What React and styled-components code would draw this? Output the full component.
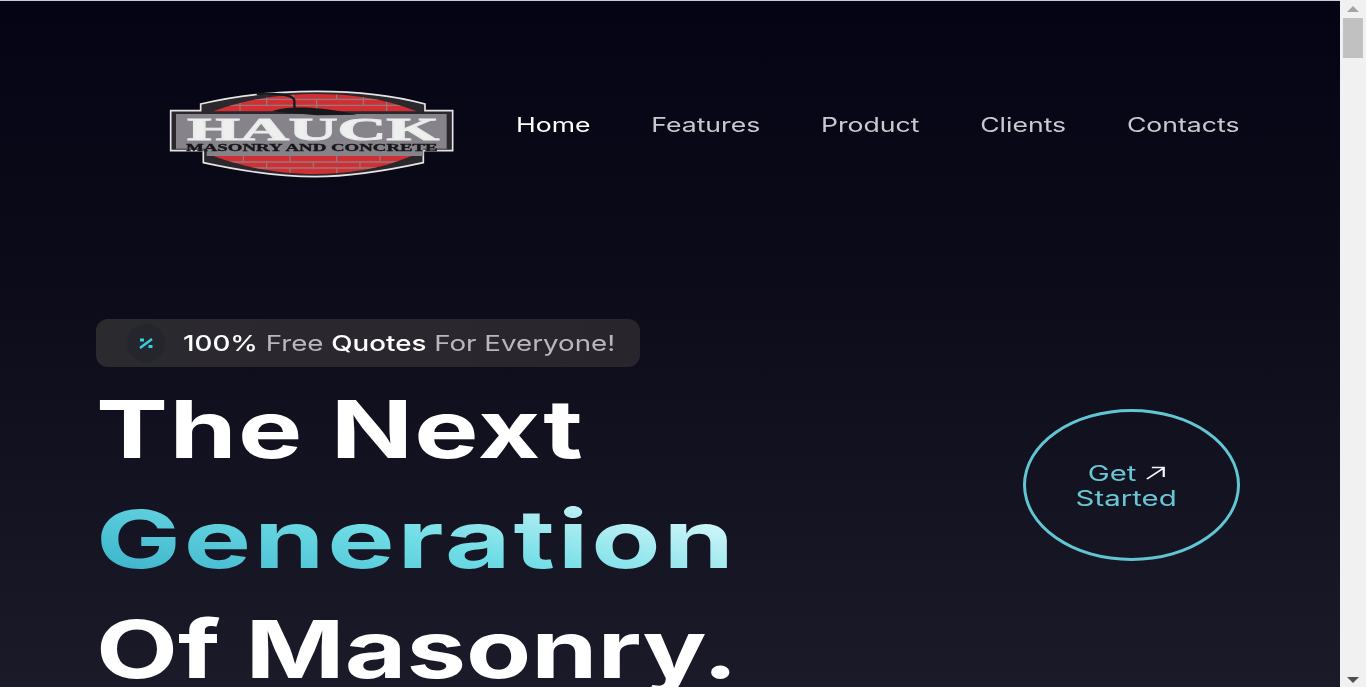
import React from "react";
import styled, { createGlobalStyle } from "styled-components";

const GlobalStyle = createGlobalStyle`
  html, body {
    margin: 0;
    padding: 0;
    height: 100%;
    overflow: hidden;
    background: #f1f1f1;
  }
`;

const Window = styled.div`
  display: flex;
  width: 1366px;
  height: 687px;
  overflow: hidden;
`;

const Page = styled.main`
  width: 1340px;
  height: 687px;
  flex: none;
  overflow: hidden;
  box-sizing: border-box;
  border-top: 1px solid #c9ccd2;
  background: linear-gradient(180deg, #040414 0%, #0b0b1a 40%, #1a1a29 100%);
  font-family: Inter, "Liberation Sans", sans-serif;
  color: #fff;
`;

const Header = styled.header`
  display: flex;
  align-items: flex-start;
  padding: 79px 0 0 160px;
`;

const LogoMark = styled.svg`
  display: block;
  width: 310px;
  height: 110px;
  flex: none;
  filter: blur(0.6px);
`;

const Nav = styled.nav`
  display: flex;
  justify-content: space-between;
  width: 544px;
  margin-left: 46px;
  margin-top: 31px;
  transform: scaleX(1.33);
  transform-origin: left center;
`;

const NavLink = styled.a`
  font-size: 20px;
  line-height: 28px;
  font-weight: 400;
  color: ${(props) => (props.$active ? "#ffffff" : "#c9c9cf")};
`;

const Hero = styled.section`
  display: flex;
  justify-content: space-between;
  align-items: flex-start;
  padding: 129px 100px 0 96px;
`;

const HeroText = styled.div`
  display: flex;
  flex-direction: column;
  align-items: flex-start;
`;

const Badge = styled.div`
  display: flex;
  align-items: center;
  gap: 18px;
  width: 544px;
  height: 48px;
  box-sizing: border-box;
  padding-left: 31px;
  border-radius: 12px;
  background: linear-gradient(90deg, #2b2a2f, #29252d);
  font-size: 22px;
  color: #b9b6bd;
`;

const BadgeIcon = styled.span`
  display: flex;
  align-items: center;
  justify-content: center;
  width: 38px;
  height: 38px;
  border-radius: 50%;
  background: #25262d;
`;

const BadgeText = styled.span`
  transform: scaleX(1.26);
  transform-origin: left center;
  white-space: nowrap;
`;

const Strong = styled.span`
  font-weight: 500;
  color: #fff;
`;

const Title = styled.h1`
  margin: 7px 0 0 0;
  font-size: 80px;
  line-height: 110px;
  font-weight: 700;
  white-space: nowrap;
`;

const TitleLine = styled.span`
  display: block;
  width: fit-content;
  letter-spacing: ${(props) => props.$spacing}px;
  transform: scaleX(${(props) => props.$stretch});
  transform-origin: left center;
`;

const Accent = styled(TitleLine)`
  background: linear-gradient(20deg, #38b0c9 5%, #6fdde6 50%, #d2f6f9 85%);
  -webkit-background-clip: text;
  background-clip: text;
  color: transparent;
`;

const CircleLink = styled.a`
  display: flex;
  align-items: center;
  justify-content: center;
  width: 217px;
  height: 152px;
  margin-top: 90px;
  box-sizing: border-box;
  padding-right: 10px;
  border: 3px solid #62c6d2;
  border-radius: 50%;
  color: #69c6d3;
`;

const CircleLabel = styled.span`
  display: flex;
  flex-direction: column;
  align-items: center;
  font-size: 21px;
  line-height: 25px;
  margin-top: 1px;
  transform: scaleX(1.4);
`;

const CircleRow = styled.span`
  display: flex;
  align-items: center;
  gap: 6px;
`;

const Scrollbar = styled.aside`
  display: flex;
  flex-direction: column;
  align-items: center;
  width: 26px;
  height: 687px;
  flex: none;
  box-sizing: border-box;
  padding: 6px 3px 4px;
  background: #f1f1f1;
`;

const ScrollThumb = styled.div`
  width: 20px;
  height: 40px;
  margin-top: 6px;
  background: #c1c1c1;
`;

const ScrollArrow = styled.svg`
  display: block;
  width: 12px;
  height: 6px;
  margin-top: ${(props) => (props.$down ? "auto" : "0")};
`;

const mortar = [
  "M100 76H830 M150 58H770 M215 40H700",
  "M320 40V58 M400 40V58 M530 40V58 M610 40V58 M240 58V76 M320 58V76 M470 58V76 M610 58V76 M680 58V76 M240 76V94 M470 76V94 M680 76V94",
  "M120 246H800 M190 264H730",
  "M250 228V246 M390 228V246 M530 228V246 M660 228V246 M320 246V264 M460 246V264 M600 246V264 M390 264V284 M530 264V284",
];

function Logo() {
  return (
    <LogoMark viewBox="0 0 930 330" aria-label="Hauck Masonry and Concrete">
      <defs>
        <clipPath id="brick-top">
          <path d="M160 94C270 54 370 42 470 42C570 42 670 54 770 94Z" />
        </clipPath>
        <clipPath id="brick-bottom">
          <path d="M160 228C270 268 370 282 465 282C560 282 660 268 755 228Z" />
        </clipPath>
      </defs>
      <path
        d="M122 72C240 44 360 34 470 34C590 34 700 46 795 72V92H878V212H790V248C680 272 570 290 465 290C360 290 240 272 130 248V212H32V92H122Z"
        fill="#2a282c"
        stroke="#e6e4e4"
        strokeWidth="5"
      />
      <path
        d="M160 94C270 54 370 42 470 42C570 42 670 54 770 94Z"
        fill="#d02f33"
      />
      <path
        d="M160 228C270 268 370 282 465 282C560 282 660 268 755 228Z"
        fill="#d02f33"
      />
      <g clipPath="url(#brick-top)">
        <path d={mortar[0]} stroke="#96787c" strokeWidth="4" fill="none" />
        <path d={mortar[1]} stroke="#96787c" strokeWidth="4" fill="none" />
      </g>
      <g clipPath="url(#brick-bottom)">
        <path d={mortar[2]} stroke="#96787c" strokeWidth="4" fill="none" />
        <path d={mortar[3]} stroke="#96787c" strokeWidth="4" fill="none" />
      </g>
      <path d="M48 102H860V206H790V228H140V206H48Z" fill="#87838a" />
      <text
        x="82"
        y="180"
        fontFamily="Liberation Serif"
        fontWeight="700"
        fontSize="92"
        textLength="755"
        lengthAdjust="spacingAndGlyphs"
        fill="#eef0ef"
        stroke="#e9ebea"
        strokeWidth="3"
      >
        HAUCK
      </text>
      <text
        x="78"
        y="213"
        fontFamily="Liberation Serif"
        fontWeight="700"
        fontSize="30"
        textLength="755"
        lengthAdjust="spacingAndGlyphs"
        fill="#17171a"
        stroke="#17171a"
        strokeWidth="1"
      >
        MASONRY AND CONCRETE
      </text>
      <path d="M335 94C380 76 480 78 590 104L470 106Z" fill="#17171c" />
      <path
        d="M290 42C340 38 395 44 402 58C406 68 400 76 405 84"
        fill="none"
        stroke="#17171c"
        strokeWidth="7"
      />
    </LogoMark>
  );
}

export default function App() {
  return (
    <Window>
      <GlobalStyle />
      <Page>
        <Header>
          <Logo />
          <Nav>
            <NavLink $active>Home</NavLink>
            <NavLink>Features</NavLink>
            <NavLink>Product</NavLink>
            <NavLink>Clients</NavLink>
            <NavLink>Contacts</NavLink>
          </Nav>
        </Header>
        <Hero>
          <HeroText>
            <Badge>
              <BadgeIcon>
                <svg width="16" height="14" viewBox="0 0 16 14">
                  <path d="M2 12L14 3" stroke="#35cfdc" strokeWidth="2.4" />
                  <rect x="2" y="2.5" width="4" height="3" fill="#35cfdc" />
                  <rect x="10.5" y="9" width="4" height="3" fill="#35cfdc" />
                </svg>
              </BadgeIcon>
              <BadgeText>
                <Strong>100%</Strong> Free <Strong>Quotes</Strong> For Everyone!
              </BadgeText>
            </Badge>
            <Title>
              <TitleLine $spacing={1} $stretch={1.35}>
                The Next
              </TitleLine>
              <Accent $spacing={2} $stretch={1.415}>
                Generation
              </Accent>
              <TitleLine $spacing={0} $stretch={1.33}>
                Of Masonry.
              </TitleLine>
            </Title>
          </HeroText>
          <CircleLink>
            <CircleLabel>
              <CircleRow>
                Get
                <svg width="14" height="14" viewBox="0 0 14 14" fill="none">
                  <path
                    d="M1 13L13 2M4.5 1.5H13V11"
                    stroke="#f2f6f7"
                    strokeWidth="1.6"
                  />
                </svg>
              </CircleRow>
              <span>Started</span>
            </CircleLabel>
          </CircleLink>
        </Hero>
      </Page>
      <Scrollbar>
        <ScrollArrow viewBox="0 0 12 6">
          <path d="M6 0L12 6H0Z" fill="#a3a3a3" />
        </ScrollArrow>
        <ScrollThumb />
        <ScrollArrow viewBox="0 0 12 6" $down>
          <path d="M0 0H12L6 6Z" fill="#505050" />
        </ScrollArrow>
      </Scrollbar>
    </Window>
  );
}
